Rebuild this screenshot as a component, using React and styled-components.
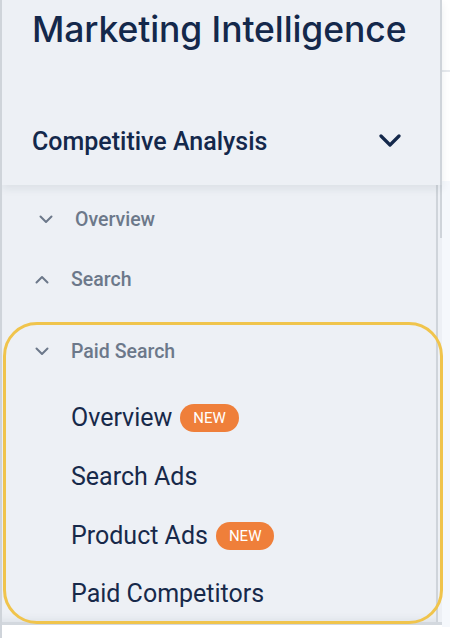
import React from "react";
import styled, { createGlobalStyle } from "styled-components";

const GlobalStyle = createGlobalStyle`
  html, body {
    margin: 0;
    padding: 0;
    background: #ffffff;
  }
  body {
    font-family: Roboto, "Liberation Sans", sans-serif;
  }
`;

const Page = styled.div`
  display: flex;
  width: 450px;
  height: 638px;
  border-left: 2px solid #cfd4da;
  box-sizing: border-box;
  overflow: hidden;
`;

const Sidebar = styled.aside`
  display: flex;
  flex-direction: column;
  width: 440px;
  height: 625px;
  flex-shrink: 0;
  background: #edf0f5;
  border-bottom: 3px solid #d3d8de;
  box-sizing: border-box;
`;

const Header = styled.header`
  display: flex;
  flex-direction: column;
  height: 185px;
  flex-shrink: 0;
  padding: 8px 0 14px 30px;
  box-sizing: border-box;
  border-right: 2px solid #cfd4da;
  box-shadow: 0 4px 8px rgba(30, 45, 70, 0.08);
  position: relative;
  z-index: 1;
`;

const Title = styled.h1`
  margin: 0;
  font-family: Inter, "Noto Sans", sans-serif;
  font-weight: 500;
  font-size: 35.5px;
  line-height: 44px;
  color: #14284b;
  letter-spacing: -0.1px;
`;

const SectionRow = styled.div`
  display: flex;
  align-items: center;
  justify-content: space-between;
  height: 60px;
  margin-top: auto;
  padding-right: 39px;
`;

const SectionTitle = styled.span`
  font-size: 25px;
  font-weight: 500;
  color: #14284b;
`;

const Nav = styled.nav`
  flex: 1;
  display: flex;
  flex-direction: column;
  width: 436px;
  padding-top: 4px;
  box-sizing: border-box;
  border-right: 2px solid #cfd4da;
  position: relative;
  box-shadow: inset 0 -8px 8px -6px rgba(30, 45, 70, 0.08);

  &::after {
    content: "";
    position: absolute;
    top: 0;
    right: -6px;
    width: 2px;
    height: 53px;
    background: #cfd4da;
  }
`;

const NavRow = styled.div`
  display: flex;
  align-items: center;
  gap: 22px;
  height: ${(p) => p.$h || 60}px;
  flex-shrink: 0;
  padding-left: ${(p) => 33 + (p.$shift || 0)}px;
  font-size: 19.5px;
  font-weight: 500;
  color: #6c788a;
`;

const Group = styled.div`
  position: relative;
  display: flex;
  flex-direction: column;
  margin-top: 13px;

  &::after {
    content: "";
    position: absolute;
    top: 0;
    left: 1px;
    right: -7px;
    bottom: -3px;
    border: 3px solid #f0c44c;
    border-radius: 34px;
    pointer-events: none;
  }
`;

const SubList = styled.div`
  display: flex;
  flex-direction: column;
  margin-top: 8px;
`;

const SubItem = styled.div`
  display: flex;
  align-items: center;
  gap: 8px;
  height: ${(p) => p.$h || 59}px;
  flex-shrink: 0;
  padding-left: 69px;
  font-size: 25px;
  font-weight: 400;
  color: #17294a;
`;

const Badge = styled.span`
  display: inline-flex;
  align-items: center;
  height: 28px;
  padding: 0 13px;
  border-radius: 14px;
  background: #ef7f3a;
  color: #ffffff;
  font-size: 15px;
  font-weight: 400;
`;

const Main = styled.div`
  flex: 1;
  display: flex;
  flex-direction: column;
  height: 627px;
`;

const TopBar = styled.div`
  height: 70px;
  background: #ffffff;
  border-bottom: 2px solid #e6e9ed;
`;

const Spacer = styled.div`
  height: 109px;
  background: #ffffff;
`;

const Content = styled.div`
  flex: 1;
  background: #f5f8fc;
`;

const Chevron = ({ up, color = "#6c788a" }) => (
  <svg width="14" height="9" viewBox="0 0 14 9" fill="none">
    <polyline
      points={up ? "1.5,7.5 7,2 12.5,7.5" : "1.5,1.5 7,7 12.5,1.5"}
      stroke={color}
      strokeWidth="2"
      strokeLinecap="round"
      strokeLinejoin="round"
    />
  </svg>
);

const BigChevron = () => (
  <svg width="22" height="14" viewBox="0 0 22 14" fill="none">
    <polyline
      points="2,2 11,11 20,2"
      stroke="#14284b"
      strokeWidth="3.2"
      strokeLinecap="round"
      strokeLinejoin="round"
    />
  </svg>
);

export default function App() {
  return (
    <>
      <GlobalStyle />
      <Page>
        <Sidebar>
          <Header>
            <Title>Marketing Intelligence</Title>
            <SectionRow>
              <SectionTitle>Competitive Analysis</SectionTitle>
              <BigChevron />
            </SectionRow>
          </Header>
          <Nav>
            <NavRow $shift={4}>
              <Chevron />
              Overview
            </NavRow>
            <NavRow>
              <Chevron up />
              Search
            </NavRow>
            <Group>
              <NavRow $h={58}>
                <Chevron />
                Paid Search
              </NavRow>
              <SubList>
                <SubItem>
                  Overview <Badge>NEW</Badge>
                </SubItem>
                <SubItem>Search Ads</SubItem>
                <SubItem>
                  Product Ads <Badge>NEW</Badge>
                </SubItem>
                <SubItem $h={56}>Paid Competitors</SubItem>
              </SubList>
            </Group>
          </Nav>
        </Sidebar>
        <Main>
          <TopBar />
          <Spacer />
          <Content />
        </Main>
      </Page>
    </>
  );
}
